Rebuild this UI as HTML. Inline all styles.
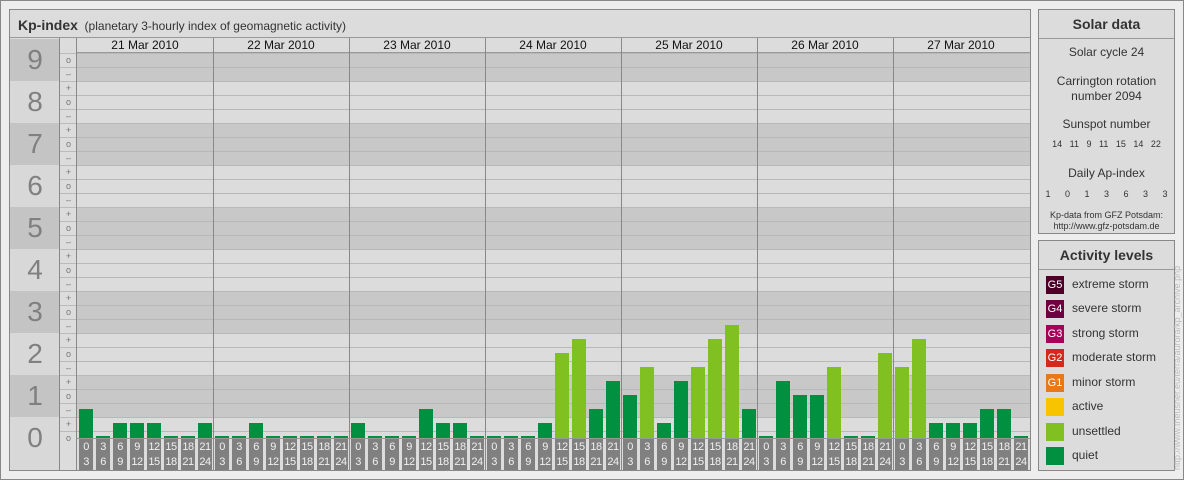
<!DOCTYPE html>
<html><head><meta charset="utf-8"><style>
*{margin:0;padding:0;box-sizing:border-box}
body{width:1184px;height:480px;overflow:hidden;background:#ededed;font-family:"Liberation Sans",sans-serif;position:relative}
#outer{position:absolute;left:0;top:0;width:1184px;height:480px;border:1px solid #888}
.abs{position:absolute}
#main{left:9px;top:9px;width:1022px;height:462px;border:1px solid #888;background:#dcdcdc}
#title{left:0;top:0;width:1020px;height:28px;border-bottom:1px solid #999;font-size:12px;color:#333;padding:7px 0 0 8px}
#title b{font-size:14px;color:#333}
.rp{border:1px solid #888;background:#dcdcdc;left:1038px;width:137px;text-align:center;color:#333}
.rp h3{height:29px;border-bottom:1px solid #999;font-size:14px;line-height:29px}
.rp p{font-size:12px;line-height:15px}
.leg{position:absolute;left:7px;font-size:12px;color:#333}
.leg span{display:inline-block;width:18px;height:18px;color:#fff;font-size:11px;line-height:18px;text-align:center;margin-right:8px;vertical-align:middle}
</style></head><body>
<div id="outer"></div>
<div id="main" class="abs">
<div id="title" class="abs"><b>Kp-index</b>&nbsp;&nbsp;(planetary 3-hourly index of geomagnetic activity)</div>
<div id="chart" class="abs" style="left:0;top:28px;width:1020px;height:432px;overflow:hidden"></div>
</div>
<div class="rp abs" style="top:9px;height:225px">
<h3>Solar data</h3>
<p style="margin-top:6px">Solar cycle 24</p>
<p style="margin-top:14px">Carrington rotation<br>number 2094</p>
<p style="margin-top:13px">Sunspot number</p>
<p style="font-size:9px;margin-top:5px;word-spacing:5px">14 11 9 11 15 14 22</p>
<p style="margin-top:14px">Daily Ap-index</p>
<p style="font-size:9px;margin-top:6px;word-spacing:12px">1 0 1 3 6 3 3</p>
<p style="font-size:9px;line-height:11px;margin-top:8px">Kp-data from GFZ Potsdam:<br>http://www.gfz-potsdam.de</p>
</div>
<div class="rp abs" style="top:240px;height:231px">
<h3>Activity levels</h3>
<div class="leg" style="top:35px"><span style="background:#4a0027">G5</span>extreme storm</div>
<div class="leg" style="top:59px"><span style="background:#6e0040">G4</span>severe storm</div>
<div class="leg" style="top:84px"><span style="background:#a8005a">G3</span>strong storm</div>
<div class="leg" style="top:108px"><span style="background:#d8281c">G2</span>moderate storm</div>
<div class="leg" style="top:133px"><span style="background:#e87818">G1</span>minor storm</div>
<div class="leg" style="top:157px"><span style="background:#f8c400"></span>active</div>
<div class="leg" style="top:182px"><span style="background:#80c020"></span>unsettled</div>
<div class="leg" style="top:206px"><span style="background:#009040"></span>quiet</div>
</div>
<div class="abs" style="left:1172px;top:250px;width:12px;height:220px;font-size:9px;color:#bbb;writing-mode:vertical-rl;transform:rotate(180deg);white-space:nowrap">http://www.theusner.eu/terra/aurora/kp_archive.php</div>
<script>
var c=document.getElementById('chart'),h='';
function r(x,y,w,hh,st){h+='<div class="abs" style="left:'+x+'px;top:'+y+'px;width:'+w+'px;height:'+hh+'px;'+st+'"></div>';}
function t(x,y,w,hh,txt,st){h+='<div class="abs" style="left:'+x+'px;top:'+y+'px;width:'+w+'px;height:'+hh+'px;'+st+'">'+txt+'</div>';}
for(var k=9;k>=0;k--){var y=38+(9-k)*42-37;var dark=(k%2==1);var bh=(k==0?60:42);
r(0,y,50,bh,'background:'+(dark?'#c4c4c4':'#d8d8d8'));
t(0,y,50,42,k,'font-size:28px;color:#808080;text-align:center;line-height:42px');
r(50,y,17,bh,'background:#dcdcdc');
r(67,y,953,bh,'background:'+(dark?'#c8c8c8':'#dcdcdc'));}
r(67,0,953,15,'background:#dcdcdc');r(50,0,17,15,'background:#dcdcdc');
for(var y=52;y<440;y+=14){r(67,y-37,953,1,'background:#b8b8b8');r(50,y-37,17,1,'background:#bbb');}
var s=['+','o','\u2013'];
for(var y=52,i=1;y<440;y+=14,i++){var lab=s[i%3];t(50,y-37,17,14,lab,'font-size:9px;color:#777;text-align:center;line-height:14px');}
r(0,0,50,432,'border-right:1px solid #888;background:transparent');
r(50,0,17,432,'border-right:1px solid #888');
r(67,14,953,1,'background:#999');
var days=['21','22','23','24','25','26','27'];
var data=[[2,0,1,1,1,0,0,1],[0,0,1,0,0,0,0,0],[1,0,0,0,2,1,1,0],[0,0,0,1,6,7,2,4],[3,5,1,4,5,7,8,2],[0,4,3,3,5,0,0,6],[5,7,1,1,1,2,2,0]];
var hr=['0','3','6','9','12','15','18','21','24'];
for(var d=0;d<7;d++){var x0=67+d*136;
if(d>0)r(x0,0,1,432,'background:#888');
t(x0,0,136,14,days[d]+' Mar 2010','font-size:12px;color:#111;text-align:center;line-height:14px');
for(var s2=0;s2<8;s2++){var v=data[d][s2];var bh=v==0?2:v*14+1;var bx=x0+2+s2*17;
r(bx,437-37-bh,14,bh,'background:'+(v>=5?'#80c020':'#009040'));
t(bx,438-37,14,31,hr[s2]+'<br>'+hr[s2+1],'background:#808080;color:#f0f0f0;font-size:11px;line-height:15px;text-align:center;letter-spacing:-0.5px;padding-top:1px');}}
r(67,437-37,953,1,'background:#999');
c.innerHTML=h;
</script>
</body></html>
